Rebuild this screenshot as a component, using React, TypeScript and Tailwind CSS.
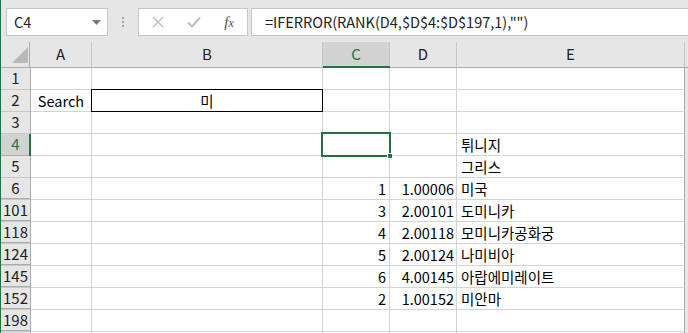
import React from "react";

type Row = { h: string; a?: string; b?: string; c?: string; d?: string; e?: string; hid?: boolean; sel?: boolean };

const rows: Row[] = [
  { h: "1" },
  { h: "2", a: "Search", b: "미" },
  { h: "3" },
  { h: "4", e: "튀니지", sel: true },
  { h: "5", e: "그리스" },
  { h: "6", c: "1", d: "1.00006", e: "미국" },
  { h: "101", hid: true, c: "3", d: "2.00101", e: "도미니카" },
  { h: "118", hid: true, c: "4", d: "2.00118", e: "모미니카공화궁" },
  { h: "124", hid: true, c: "5", d: "2.00124", e: "나미비아" },
  { h: "145", hid: true, c: "6", d: "4.00145", e: "아랍에미레이트" },
  { h: "152", hid: true, c: "2", d: "1.00152", e: "미안마" },
  { h: "198", hid: true },
  { h: "", hid: true },
];

const font = { fontFamily: '"Noto Sans CJK KR", "Noto Sans", sans-serif' };

export default function App() {
  return (
    <div
      className="w-[688px] h-[333px] overflow-hidden bg-[#e6e6e6] border-l border-[#217346] text-[#000] relative"
      style={font}
    >
      {/* toolbar */}
      <div className="h-[42px] flex items-start pt-[8px] pl-[5px]">
        <div className="w-[102px] shrink-0 h-[28px] bg-white border border-[#c6c6c6] flex items-center pl-[7px] pr-[6px] text-[14.5px] text-[#222]">
          <span className="flex-1 leading-none">C4</span>
          <svg width="9" height="5" viewBox="0 0 9 5">
            <path d="M0 0 L9 0 L4.5 5 Z" fill="#7a7a7a" />
          </svg>
        </div>
        <div className="w-[30px] shrink-0 h-[28px] flex flex-col items-center justify-center gap-[2px]">
          <div className="w-[2px] h-[2px] bg-[#a6a6a6]" />
          <div className="w-[2px] h-[2px] bg-[#a6a6a6]" />
          <div className="w-[2px] h-[2px] bg-[#a6a6a6]" />
        </div>
        <div className="w-[110px] shrink-0 h-[28px] bg-white border border-[#c6c6c6] flex items-center">
          <div className="w-[38px] flex justify-center">
            <svg width="12" height="12" viewBox="0 0 12 12">
              <path d="M1 1 L11 11 M11 1 L1 11" stroke="#bdbdbd" strokeWidth="1.3" />
            </svg>
          </div>
          <div className="w-[34px] flex justify-center">
            <svg width="14" height="12" viewBox="0 0 14 12">
              <path d="M1 6.5 L5 10.5 L13 1.5" stroke="#bdbdbd" strokeWidth="2" fill="none" />
            </svg>
          </div>
          <div className="w-[36px] flex justify-center">
            <span
              className="italic text-[15px] text-[#555] leading-none"
              style={{ fontFamily: '"Liberation Serif", serif' }}
            >
              f<span className="text-[12px]">x</span>
            </span>
          </div>
        </div>
        <div className="ml-[3px] w-[460px] shrink-0 h-[28px] bg-white border border-[#c6c6c6] flex items-center pl-[13px] text-[14.5px] text-[#222] whitespace-nowrap">
          =IFERROR(RANK(D4,$D$4:$D$197,1),"")
        </div>
      </div>

      {/* column header */}
      <div className="h-[26px] flex border-b border-[#ababab] text-[15px] text-[#222]">
        <div className="w-[29px] h-full border-r border-[#ababab] relative shrink-0">
          <svg className="absolute left-[11px] top-[5px]" width="16" height="16" viewBox="0 0 16 16">
            <path d="M16 0 L16 16 L0 16 Z" fill="#b9b9b9" />
          </svg>
        </div>
        <div className="w-[62px] shrink-0 border-r border-[#c8c8c8] flex items-center justify-center">A</div>
        <div className="w-[231px] shrink-0 border-r border-[#c8c8c8] flex items-center justify-center">B</div>
        <div className="w-[67px] shrink-0 border-r border-[#c8c8c8] bg-[#d2d2d2] text-[#217346] flex items-center justify-center relative">
          C
          <div className="absolute left-0 right-[-1px] bottom-[-1px] h-[2px] bg-[#217346]" />
        </div>
        <div className="w-[67px] shrink-0 border-r border-[#c8c8c8] flex items-center justify-center">D</div>
        <div className="w-[228px] shrink-0 border-r border-[#c8c8c8] flex items-center justify-center">E</div>
      </div>

      {/* grid */}
      <div className="relative">
        {rows.map((r, i) => (
          <div key={i} className="h-[22px] flex text-[14.5px]">
            <div
              className={
                "w-[29px] shrink-0 h-full border-b flex items-center justify-center text-[15px] relative " +
                (r.sel
                  ? "bg-[#d2d2d2] text-[#217346] border-[#ababab]"
                  : "text-[#222] border-[#c8c8c8]")
              }
            >
              {r.hid && <div className="absolute left-0 right-0 top-[-2px] h-[1px] bg-[#ababab]" />}
              {r.h}
              <div
                className={
                  "absolute top-0 bottom-[-1px] " +
                  (r.sel ? "right-[-1px] w-[2px] bg-[#217346]" : "right-[-1px] w-[1px] bg-[#ababab]")
                }
              />
            </div>
            <div className="w-[62px] shrink-0 bg-white border-l border-[#ababab] border-r border-b border-r-[#d4d4d4] border-b-[#d4d4d4] flex items-center justify-center whitespace-nowrap">
              {r.a}
            </div>
            <div className="w-[231px] shrink-0 bg-white border-r border-b border-[#d4d4d4] flex items-center justify-center">
              {r.b}
            </div>
            <div className="w-[67px] shrink-0 bg-white border-r border-b border-[#d4d4d4] flex items-center justify-end pr-[3px]">
              {r.c}
            </div>
            <div className="w-[67px] shrink-0 bg-white border-r border-b border-[#d4d4d4] flex items-center justify-end pr-[2px]">
              {r.d}
            </div>
            <div className="w-[228px] shrink-0 bg-white border-r border-b border-[#d4d4d4] border-r-[#ababab] flex items-center pl-[4px] whitespace-nowrap">
              {r.e}
            </div>
          </div>
        ))}
        {/* B2 box */}
        <div className="absolute left-[90px] top-[21px] w-[232px] h-[23px] border border-black pointer-events-none" />
        {/* selection C4 */}
        <div className="absolute left-[320px] top-[64px] w-[70px] h-[25px] border-2 border-[#217346]" />
        <div className="absolute left-[386px] top-[85px] w-[6px] h-[6px] bg-[#217346] border border-white" />
      </div>
    </div>
  );
}
